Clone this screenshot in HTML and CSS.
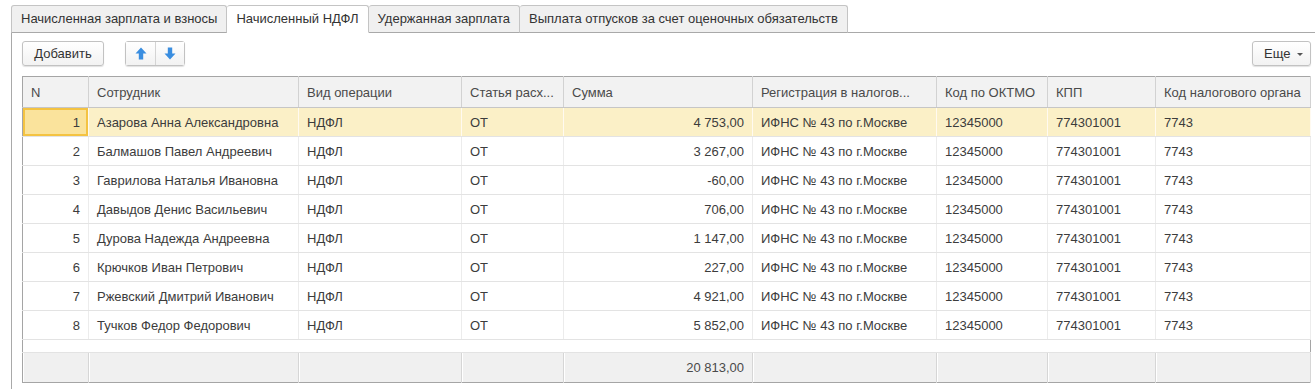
FILE: index.html
```html
<!DOCTYPE html>
<html lang="ru">
<head>
  <meta charset="UTF-8">
  <title>Начисленный НДФЛ</title>
  <link rel="stylesheet" href="styles.css">
</head>
<body>

<!-- Tabs -->
<div class="tabs">
  <div class="tab">Начисленная зарплата и взносы</div>
  <div class="tab active">Начисленный НДФЛ</div>
  <div class="tab">Удержанная зарплата</div>
  <div class="tab">Выплата отпусков за счет оценочных обязательств</div>
</div>

<div class="panel">
  <!-- Toolbar -->
  <div class="toolbar">
    <button class="btn btn-add">Добавить</button>
    <div class="btn-group">
      <button class="btn btn-icon" title="Вверх">
        <svg width="12" height="13" viewBox="0 0 12 13"><path d="M6 0.5 L11.5 6.5 H8.2 V12.5 H3.8 V6.5 H0.5 Z" fill="#3a8ee0"/></svg>
      </button>
      <button class="btn btn-icon" title="Вниз">
        <svg width="12" height="13" viewBox="0 0 12 13"><path d="M6 12.5 L11.5 6.5 H8.2 V0.5 H3.8 V6.5 H0.5 Z" fill="#3a8ee0"/></svg>
      </button>
    </div>
    <button class="btn btn-more">Еще <span class="caret"></span></button>
  </div>

  <!-- Grid -->
  <table class="grid">
    <colgroup>
      <col style="width:66px">
      <col style="width:210px">
      <col style="width:163px">
      <col style="width:102px">
      <col style="width:189px">
      <col style="width:184px">
      <col style="width:111px">
      <col style="width:108px">
      <col style="width:155px">
    </colgroup>
    <thead>
      <tr>
        <th>N</th>
        <th>Сотрудник</th>
        <th>Вид операции</th>
        <th>Статья расх...</th>
        <th>Сумма</th>
        <th>Регистрация в налогов...</th>
        <th>Код по ОКТМО</th>
        <th>КПП</th>
        <th>Код налогового органа</th>
      </tr>
    </thead>
    <tbody id="rows"></tbody>
    <tfoot>
      <tr>
        <td></td><td></td><td></td><td></td>
        <td class="num">20 813,00</td>
        <td></td><td></td><td></td><td></td>
      </tr>
    </tfoot>
  </table>
</div>

<script>
  const rows = [
    ['Азарова Анна Александровна', '4 753,00'],
    ['Балмашов Павел Андреевич', '3 267,00'],
    ['Гаврилова Наталья Ивановна', '-60,00'],
    ['Давыдов Денис Васильевич', '706,00'],
    ['Дурова Надежда Андреевна', '1 147,00'],
    ['Крючков Иван Петрович', '227,00'],
    ['Ржевский Дмитрий Иванович', '4 921,00'],
    ['Тучков Федор Федорович', '5 852,00']
  ];

  document.getElementById('rows').innerHTML = rows.map((r, i) => `
    <tr class="${i === 0 ? 'selected' : ''}">
      <td class="num ${i === 0 ? 'current' : ''}">${i + 1}</td>
      <td>${r[0]}</td>
      <td>НДФЛ</td>
      <td>ОТ</td>
      <td class="num">${r[1]}</td>
      <td>ИФНС № 43 по г.Москве</td>
      <td>12345000</td>
      <td>774301001</td>
      <td>7743</td>
    </tr>
  `).join('') + '<tr class="filler"><td colspan="9"></td></tr>';
</script>
</body>
</html>
```

FILE: styles.css
```css
/* General */
* {
  margin: 0;
  padding: 0;
  box-sizing: border-box;
}

body {
  font-family: "Liberation Sans", Arial, sans-serif;
  font-size: 13px;
  color: #3c3c3c;
  background-color: #fff;
}

/* Tabs */
.tabs {
  display: flex;
  padding: 5px 0 0 11px;
  position: relative;
  z-index: 1;
}

.tab {
  height: 28px;
  line-height: 26px;
  padding: 0 9px;
  background-color: #f0f0f0;
  border: 1px solid #c4c4c4;
  border-bottom: 1px solid #a9a9a9;
  border-left: none;
  border-radius: 3px 3px 0 0;
  color: #333;
  white-space: nowrap;
}

.tab:first-child {
  border-left: 1px solid #c4c4c4;
}

.tab.active {
  background-color: #fff;
  border-bottom-color: #fff;
}

/* Panel */
.panel {
  margin-top: -1px;
  margin-left: 11px;
  border-top: 1px solid #a9a9a9;
  border-left: 1px solid #a9a9a9;
  padding: 8px 4px 6px 10px;
  height: 357px;
}

.toolbar {
  display: flex;
  align-items: center;
  gap: 21px;
  margin-bottom: 10px;
}

.btn {
  height: 25px;
  font-family: inherit;
  font-size: 13px;
  color: #333;
  background: linear-gradient(#fff, #f2f2f2);
  border: 1px solid #c2c2c2;
  border-radius: 3px;
  box-shadow: 0 1px 1px rgba(0, 0, 0, 0.12);
  cursor: pointer;
}

.btn-add {
  width: 82px;
}

.btn-group {
  display: flex;
  border: 1px solid #c2c2c2;
  border-radius: 3px;
  box-shadow: 0 1px 1px rgba(0, 0, 0, 0.12);
}

.btn-group .btn {
  width: 29px;
  height: 23px;
  border: none;
  border-radius: 0;
  box-shadow: none;
  display: flex;
  align-items: center;
  justify-content: center;
}

.btn-group .btn + .btn {
  border-left: 1px solid #d4d4d4;
}

.btn-more {
  margin-left: auto;
  width: 59px;
  padding-left: 4px;
}

.caret {
  display: inline-block;
  width: 0;
  height: 0;
  margin-left: 3px;
  vertical-align: middle;
  border-left: 3px solid transparent;
  border-right: 3px solid transparent;
  border-top: 3px solid #555;
}

/* Grid */
.grid {
  width: 1289px;
  table-layout: fixed;
  border-collapse: collapse;
  border: 1px solid #a5a5a5;
}

.grid th,
.grid td {
  text-align: left;
  font-weight: normal;
  white-space: nowrap;
  overflow: hidden;
  padding: 0 8px;
}

.grid th {
  height: 31px;
  background-color: #f2f2f2;
  border-right: 1px solid #d2d2d2;
  border-bottom: 1px solid #c6c6c6;
  color: #4a4a4a;
}

.grid tbody td {
  height: 29px;
  border-bottom: 1px solid #e3e3e3;
  border-right: 1px solid #ececec;
}

.grid .num {
  text-align: right;
}

.grid tr.selected td {
  background-color: #fbf0c7;
  border-right-color: #fffaf0;
}

.grid tr.selected td.current {
  background-color: #fae39c;
  box-shadow: inset 0 0 0 2px #f4c342;
}

.grid tr.filler td {
  height: 13px;
  border-right: none;
}

.grid tfoot td {
  height: 30px;
  background-color: #f0f0f0;
  border-top: 1px solid #c6c6c6;
  border-right: 1px solid #d6d6d6;
  box-shadow: inset 1px 0 0 #fff;
  color: #4a4a4a;
}
```
